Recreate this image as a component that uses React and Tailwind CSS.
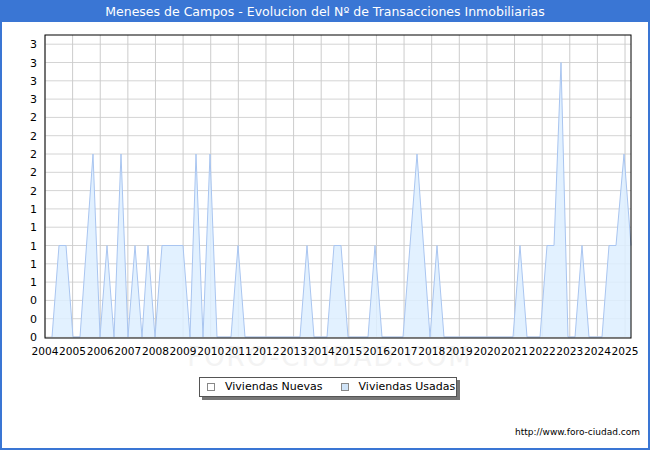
import React from 'react';

const X0 = 45, X1 = 631, Y0 = 35, YB = 337;
const yearX = (i) => X0 + i * 27.62;
const yv = (v) => YB - v * 91.5;

// [x, value] pairs traced from the series
const pts = [
  [52, 0], [59, 1], [66, 1], [73, 0], [80, 0], [93, 2], [100, 0], [107, 1], [114, 0], [121, 2], [128, 0],
  [135, 1], [142, 0], [148, 1], [155, 0], [162, 1], [183, 1], [190, 0], [196, 2], [203, 0], [210, 2],
  [217, 0], [231, 0], [238, 1], [245, 0], [300, 0], [307, 1], [314, 0], [327, 0], [334, 1], [341, 1],
  [348, 0], [368, 0], [375, 1], [382, 0], [403, 0], [417, 2], [430, 0], [437, 1], [444, 0], [513, 0],
  [520, 1], [527, 0], [540, 0], [547, 1], [554, 1], [561, 3], [568, 0], [575, 0], [582, 1], [589, 0],
  [602, 0], [609, 1], [616, 1], [624, 2], [631, 1],
];

const yLabels = ['0', '0', '0', '1', '1', '1', '1', '1', '2', '2', '2', '2', '2', '3', '3', '3', '3'];

export default function App() {
  const line = pts.map(([x, v]) => `${x},${yv(v)}`).join(' ');
  const area = `${pts[0][0]},${YB} ${line} ${X1},${YB}`;
  return (
    <div className="w-[650px] h-[450px] bg-white border-2 border-[#3a76d4] flex flex-col" style={{ fontFamily: '"DejaVu Sans", Verdana, sans-serif' }}>
      <div className="h-[20px] bg-[#3a76d4] text-white text-[12.5px] flex items-center justify-center leading-none">
        Meneses de Campos - Evolucion del Nº de Transacciones Inmobiliarias
      </div>
      <svg width="646" height="350" viewBox="2 22 646 350" className="block">
        {yLabels.map((l, i) => (
          <line key={'h' + i} x1={X0} x2={X1} y1={YB - i * 18.3} y2={YB - i * 18.3} stroke="#d4d4d4" />
        ))}
        {Array.from({ length: 22 }).map((_, i) => (
          <line key={'v' + i} x1={yearX(i)} x2={yearX(i)} y1={Y0} y2={YB} stroke="#cccccc" />
        ))}
        <text x="330" y="366" textAnchor="middle" fontSize="26" fill="#f3f3f3" letterSpacing="2">FORO-CIUDAD.COM</text>
        <polygon points={area} fill="#ddeeff" fillOpacity="0.85" />
        <polyline points={line} fill="none" stroke="#a9c5f0" strokeWidth="1" />
        <rect x={X0} y={Y0} width={X1 - X0} height={YB - Y0 + 1} fill="none" stroke="#000" />
        {yLabels.map((l, i) => (
          <text key={'y' + i} x="37" y={YB - i * 18.3 + 4} textAnchor="end" fontSize="11" fill="#000">{l}</text>
        ))}
        {Array.from({ length: 22 }).map((_, i) => (
          <text key={'t' + i} x={yearX(i) - 13.5} y="355" fontSize="11" fill="#000" textLength="27" lengthAdjust="spacingAndGlyphs">{2004 + i}</text>
        ))}
      </svg>
      <div className="flex justify-center mt-[5px] ml-[6px]">
        <div className="flex items-center border border-[#555] bg-white h-[20px] px-[6px] text-[11px] whitespace-nowrap shadow-[3px_3px_0_#777] w-[258px]">
          <span className="w-[8px] h-[8px] shrink-0 border border-[#888] bg-white ml-[1px]" />
          <span className="ml-[10px]">Viviendas Nuevas</span>
          <span className="w-[8px] h-[8px] shrink-0 border border-[#888] bg-[#cfe3f7] ml-[18px]" />
          <span className="ml-[10px]">Viviendas Usadas</span>
        </div>
      </div>
      <div className="flex-1 flex items-end justify-end pr-[8px] pb-[9px] text-[9px]">http://www.foro-ciudad.com</div>
    </div>
  );
}
